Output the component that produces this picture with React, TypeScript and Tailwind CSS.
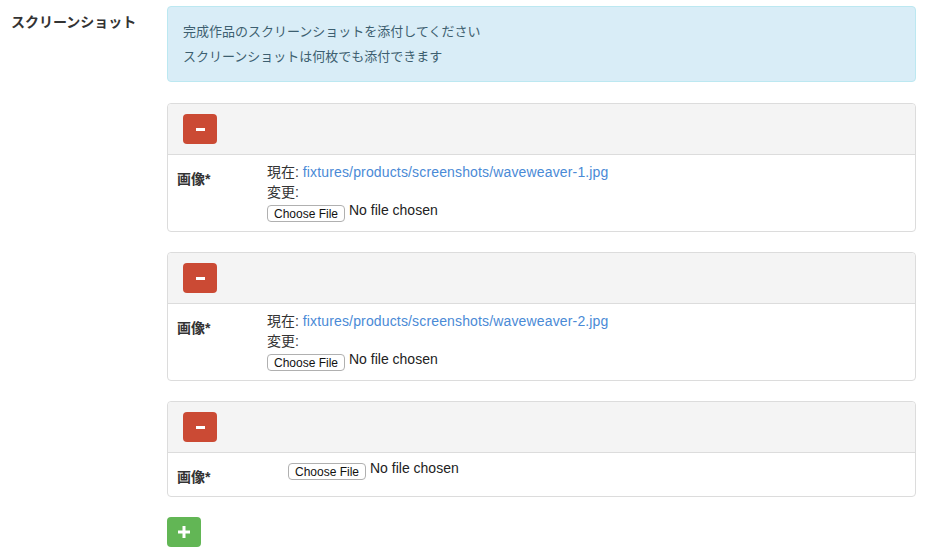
const shots = [
  { current: "fixtures/products/screenshots/waveweaver-1.jpg" },
  { current: "fixtures/products/screenshots/waveweaver-2.jpg" },
  { current: null },
];

function FileInput() {
  return (
    <div className="flex h-[23px] items-start">
      <span className="mt-[3px] flex h-[17px] w-[78px] items-center justify-center rounded-[4px] border border-[#b0b0b0] bg-white text-[12px] leading-none text-[#111] [font-family:'Liberation_Sans',sans-serif]">
        Choose File
      </span>
      <span className="ml-[4px] text-[14px] leading-[17px] text-[#222]">No file chosen</span>
    </div>
  );
}

function ShotPanel({ current }: { current: string | null }) {
  return (
    <div className="rounded-[4px] border border-[#dcdcdc]">
      <div className="rounded-t-[4px] border-b border-[#dcdcdc] bg-[#f4f4f4] px-[15px] py-[10px]">
        <button className="flex h-[30px] w-[34px] items-center justify-center rounded-[4px] bg-[#cb4a34]">
          <span className="h-[3px] w-[9px] bg-white" />
        </button>
      </div>
      <div className="flex pt-[7px] pb-[6px] pl-[9px]">
        <div className="w-[90px] pt-[7px] pb-[3px] text-[14px] font-bold leading-[20px] text-[#333]">
          画像*
        </div>
        <div className="text-[14px] leading-[20px] text-[#333]">
          {current ? (
            <>
              <div>
                現在: <span className="text-[#4a8ad6] tracking-[0.15px]">{current}</span>
              </div>
              <div>変更:</div>
              <FileInput />
            </>
          ) : (
            <div className="ml-[21px]">
              <FileInput />
            </div>
          )}
        </div>
      </div>
    </div>
  );
}

export default function App() {
  return (
    <div className="flex min-h-[558px] bg-white pt-[6px] pr-[23px] [font-family:'Liberation_Sans','Noto_Sans_CJK_JP',sans-serif]">
      <div className="w-[167px] pl-[11px] pt-[6px] text-[14px] font-bold leading-[20px] text-[#333]">
        スクリーンショット
      </div>
      <div className="flex flex-1 flex-col">
        <div className="rounded-[4px] border border-[#bce8f1] bg-[#d9edf7] px-[15px] py-[12px] text-[13px] leading-[25px] text-[#3d5f70]">
          <div>完成作品のスクリーンショットを添付してください</div>
          <div>スクリーンショットは何枚でも添付できます</div>
        </div>
        <div className="mt-[21px] flex flex-col gap-[20px]">
          {shots.map((s, i) => (
            <ShotPanel key={i} current={s.current} />
          ))}
        </div>
        <div className="mt-[20px]">
          <button className="flex h-[30px] w-[34px] items-center justify-center rounded-[4px] bg-[#62b655]">
            <svg width="12" height="12" viewBox="0 0 12 12">
              <rect x="4.5" y="0" width="3" height="12" fill="white" />
              <rect x="0" y="4.5" width="12" height="3" fill="white" />
            </svg>
          </button>
        </div>
      </div>
    </div>
  );
}
